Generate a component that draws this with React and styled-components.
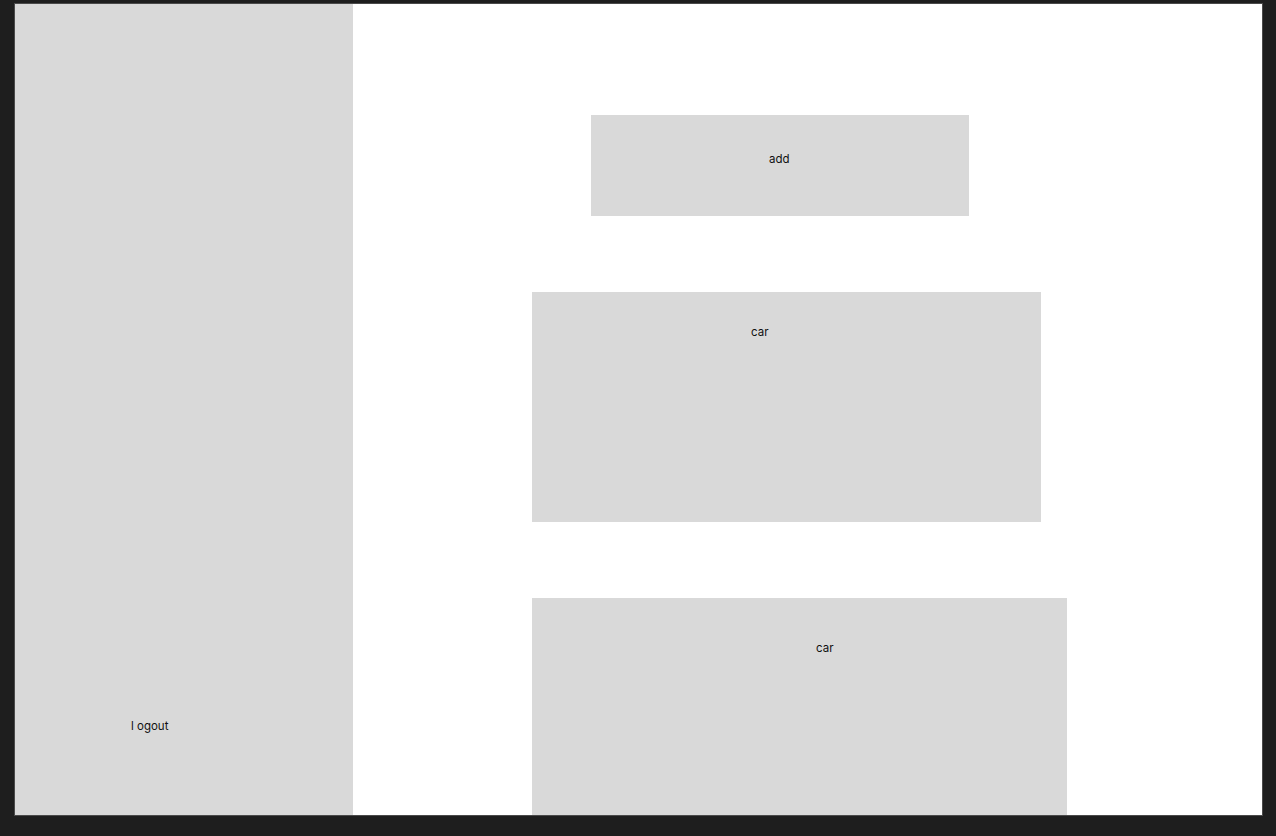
import React from "react";
import styled, { createGlobalStyle } from "styled-components";

const Global = createGlobalStyle`
  html, body { margin: 0; padding: 0; background: #1e1e1e; }
  body { font-family: Inter, "Noto Sans", sans-serif; }
`;

const Canvas = styled.div`
  width: 1276px;
  height: 836px;
  padding: 4px 0 0 15px;
  box-sizing: border-box;
  background: #1e1e1e;
`;

const Frame = styled.div`
  width: 1247px;
  height: 811px;
  display: flex;
  overflow: hidden;
  background: #ffffff;
  box-shadow: 0 0 0 1px #4a4a4a;
`;

const Sidebar = styled.aside`
  width: 338px;
  flex: none;
  background: #d9d9d9;
  display: flex;
  flex-direction: column;
  justify-content: flex-end;
  padding: 0 0 81px 116px;
  box-sizing: border-box;
`;

const Label = styled.span`
  font-size: 11.5px;
  line-height: 15px;
  color: #111;
`;

const Main = styled.main`
  flex: 1;
  display: flex;
  flex-direction: column;
  align-items: flex-start;
  padding-top: 111px;
  gap: 76px;
`;

const Block = styled.div`
  flex: none;
  background: #d9d9d9;
  box-sizing: border-box;
  margin-left: ${(p) => p.$left}px;
  width: ${(p) => p.$w}px;
  height: ${(p) => p.$h}px;
  padding-top: ${(p) => p.$pt}px;
  padding-left: ${(p) => p.$pl}px;
`;

export default function App() {
  return (
    <>
      <Global />
      <Canvas>
        <Frame>
          <Sidebar>
            <Label>l ogout</Label>
          </Sidebar>
          <Main>
            <Block $left={238} $w={378} $h={101} $pt={32} $pl={178}>
              <Label>add</Label>
            </Block>
            <Block $left={179} $w={509} $h={230} $pt={28} $pl={219}>
              <Label>car</Label>
            </Block>
            <Block $left={179} $w={535} $h={230} $pt={38} $pl={284}>
              <Label>car</Label>
            </Block>
          </Main>
        </Frame>
      </Canvas>
    </>
  );
}
